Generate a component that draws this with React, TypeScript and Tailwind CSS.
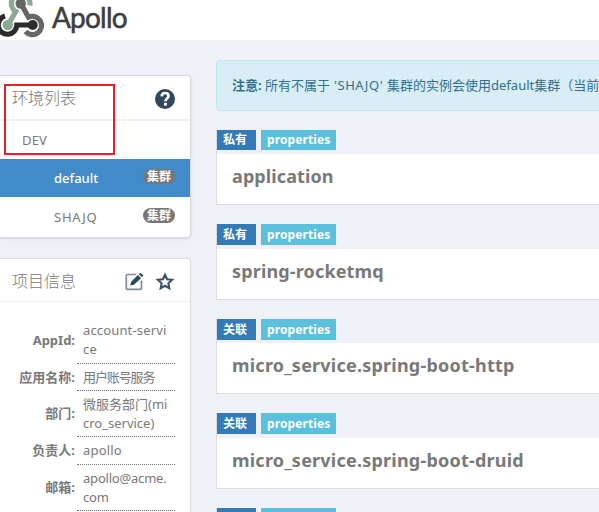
import React from 'react';

const info = [
  { label: 'AppId:', lines: ['account-servi', 'ce'], row: 'h-[47px]', track: 'tracking-[0.15px]' },
  { label: '应用名称:', lines: ['用户账号服务'], row: 'h-[27px]', track: 'tracking-[-1.1px]' },
  { label: '部门:', lines: ['微服务部门(mi', 'cro_service)'], row: 'h-[46px]', track: '' },
  { label: '负责人:', lines: ['apollo'], row: 'h-[28px]', track: 'tracking-[0.2px]' },
  { label: '邮箱:', lines: ['apollo@acme.', 'com'], row: 'h-[46px]', track: 'tracking-[-0.2px]' },
];

const namespaces = [
  { kind: '私有', name: 'application', gap: 'h-[24px]', tag: 'h-[20px]', track: 'tracking-[0.1px]' },
  { kind: '私有', name: 'spring-rocketmq', gap: 'h-[25px]', tag: 'h-[21px]', track: 'tracking-[0.15px]' },
  { kind: '关联', name: 'micro_service.spring-boot-http', gap: 'h-[24px]', tag: 'h-[21px]', track: 'tracking-[0.22px]' },
  { kind: '关联', name: 'micro_service.spring-boot-druid', gap: 'h-[25px]', tag: 'h-[21px]', track: 'tracking-[0.22px]' },
];

function Logo() {
  return (
    <svg width="46" height="40" viewBox="0 0 46 40" fill="none" strokeWidth="5.2" className="shrink-0">
      <path d="M8 25 15.800 11.500A9.300 9.300 0 1 1 29.800 5.500" stroke="#8fa896" />
      <circle cx="7.800" cy="25" r="5.200" fill="#8fa896" />
      <path d="M5 16A9.300 9.300 0 1 0 16.800 25H33" stroke="#2b2b2b" />
      <circle cx="32.700" cy="25" r="5" fill="#2b2b2b" />
      <path d="M21 4 28.500 17.100A9.200 9.200 0 1 1 25.500 31.600" stroke="#666" />
      <circle cx="20.700" cy="3.500" r="5.200" fill="#666" />
    </svg>
  );
}

function HelpIcon() {
  return (
    <svg width="20" height="20" viewBox="0 0 20 20" fill="none">
      <circle cx="10" cy="10" r="10" fill="#31475f" />
      <path d="M6.700 7.400C6.800 5.200 8.100 4 10.100 4c2 0 3.400 1.100 3.400 2.900 0 2.400-3.100 2.700-3.100 5.400" stroke="#fff" strokeWidth="2.700" />
      <path d="M8.900 13.800h3v2.800h-3z" fill="#fff" />
    </svg>
  );
}

function EditIcon() {
  return (
    <svg width="20" height="20" viewBox="0 0 20 20" fill="none">
      <path d="M12 2.500H3.500A1.200 1.200 0 0 0 2.300 3.700V16.200a1.200 1.200 0 0 0 1.200 1.200H16.300a1.200 1.200 0 0 0 1.200-1.200V8.500" stroke="#7e8b9b" strokeWidth="1.700" />
      <path d="M6.100 13.500 7.200 9.800 13.900 3 17.100 6.200 10 12.700ZM14.900 2.200 16.400.7 19.400 3.600 17.900 5.300Z" fill="#31475f" />
    </svg>
  );
}

function StarIcon() {
  return (
    <svg width="20" height="20" viewBox="0 0 20 20" fill="none">
      <path d="m10 2.700 2.100 4.500 5 .6-3.700 3.500.9 4.900-4.300-2.400-4.300 2.400.9-4.900-3.700-3.500 5-.6Z" stroke="#3c5068" strokeWidth="2.100" />
    </svg>
  );
}

function ClusterRow({ name, active }: { name: string; active?: boolean }) {
  return (
    <div className={`flex justify-between pl-[54px] pr-[15px] ${active ? 'h-[38px] bg-[#428bca] font-medium text-white' : 'h-[40px] pt-px'}`}>
      <span className={`pt-[9px] leading-5 ${active ? '' : 'tracking-[0.8px]'}`}>{name}</span>
      <span className="mt-[10px] flex h-[15px] w-8 items-center justify-center rounded-full bg-[#777] text-[12px] font-bold leading-none text-white">集群</span>
    </div>
  );
}

export default function App() {
  return (
    <div className="h-[512px] w-[599px] overflow-hidden bg-[#f0f1f6] font-['Noto_Sans','Noto_Sans_CJK_SC',sans-serif] text-[13px] text-[#797979]">
      <header className="flex h-10 bg-white">
        <Logo />
        <span className="ml-[6px] font-['Lato',sans-serif] text-[28px] leading-[34px] tracking-[-0.8px] text-[#3d3d3d] [-webkit-text-stroke:0.5px_#3d3d3d]">Apollo</span>
      </header>
      <div className="flex">
        <aside className="w-[191px] shrink-0 pt-[35px]">
          <section className="relative h-[163px] rounded-r border-y border-r border-[#d9dadd] bg-white shadow-sm">
            <div className="flex h-[45px] justify-between border-b-2 border-[#eff0f5] pl-3 pr-[15px] pt-[13px]">
              <h2 className="text-[16px] font-light leading-[18px]">环境列表</h2>
              <HelpIcon />
            </div>
            <div className="h-[38px] pl-[22px] pt-[9px] leading-5 tracking-[0.2px]">DEV</div>
            <ClusterRow name="default" active />
            <ClusterRow name="SHAJQ" />
            <div className="absolute left-1 top-2 h-[71px] w-[111px] border-2 border-[#ee1c25]" />
          </section>
          <section className="mt-5 h-[300px] rounded-tr border-r border-t border-[#d9dadd] bg-white">
            <div className="flex h-[43px] justify-between border-b border-[#eff0f5] pl-3 pr-[15px] pt-[13px]">
              <h2 className="text-[16px] font-light leading-[18px]">项目信息</h2>
              <div className="flex gap-[11px]"><EditIcon /><StarIcon /></div>
            </div>
            <div className="mt-[15px]">
              {info.map((r) => (
                <div key={r.label} className={`flex items-center ${r.row}`}>
                  <div className="w-[75px] pb-[2px] text-right font-bold leading-5">{r.label}</div>
                  <div className="ml-[2px] flex h-full w-[98px] flex-col justify-center border-b border-dotted border-[#777] pl-[6px] leading-[19px]">
                    {r.lines.map((l) => <div key={l} className={`whitespace-nowrap ${r.track}`}>{l}</div>)}
                  </div>
                </div>
              ))}
            </div>
          </section>
        </aside>
        <main className="min-w-0 flex-1 pl-[25px] pt-5">
          <div className="h-[51px] w-[720px] whitespace-nowrap rounded border border-[#bce8f1] bg-[#d9edf7] pl-[15px] pt-[14px] leading-5 text-[#31708f]">
            <b>注意:</b> 所有不属于<span className="tracking-[0.55px]"> 'SHAJQ' </span>集群的实例会使用default集群（当前
          </div>
          <div className="pt-[19px]">
            {namespaces.map((n) => (
              <section key={n.name}>
                <div className={`flex gap-[5px] border-l border-[#d9dadd] text-[12px] font-bold text-white ${n.gap}`}>
                  <span className={`flex w-[39px] items-center bg-[#337ab7] pl-[6px] ${n.tag}`}>{n.kind}</span>
                  <span className={`flex w-[75px] items-center bg-[#5bc0de] pl-[6px] tracking-[0.1px] ${n.tag}`}>properties</span>
                </div>
                <div className={`mb-[19px] h-[51px] border-b border-l border-[#dddee2] bg-white pl-[15px] pt-[8px] text-[18px] font-bold leading-7 ${n.track}`}>{n.name}</div>
              </section>
            ))}
            <div className="flex h-1 gap-[5px] border-l border-[#d9dadd]">
              <span className="w-[39px] bg-[#337ab7]" />
              <span className="w-[75px] bg-[#5bc0de]" />
            </div>
          </div>
        </main>
      </div>
    </div>
  );
}
